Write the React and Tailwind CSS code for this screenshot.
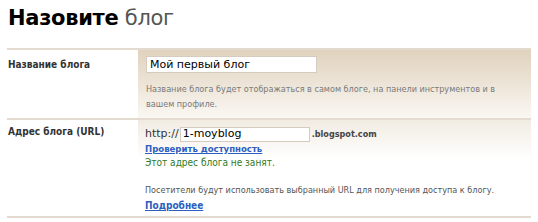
export default function App() {
  return (
    <div className="w-[538px] h-[222px] bg-white px-[7px] pt-[4px] text-[#333]" style={{ fontFamily: '"DejaVu Sans Condensed", "Liberation Sans", sans-serif' }}>
      {/* заголовок */}
      <h1 className="h-[44px] pl-[1px] pt-[2px] text-[21px] leading-[24px] tracking-[-0.3px]" style={{ fontFamily: '"DejaVu Sans", sans-serif' }}>
        <span className="font-bold text-black">Назовите</span>{' '}
        <span className="text-[#555]">блог</span>
      </h1>

      {/* название */}
      <div className="flex border-t-2 border-[#e3dbcf]">
        <div className="w-[131px] pl-[1px] pt-[7px] text-[10px] font-bold">Название блога</div>
        <div className="flex-1 bg-gradient-to-b from-[#e0d2bd] to-[#faf7f3] pl-[8px] pt-[6px] pb-[6px]">
          <input
            className="block w-[171px] h-[17px] border border-[#d5ccbf] bg-white px-[3px] text-[11px] text-black outline-none"
            style={{ fontFamily: '"DejaVu Sans", sans-serif' }}
            defaultValue="Мой первый блог"
          />
          <p className="mt-[9px] text-[9px] leading-[15px] text-[#7a7a7a] pr-[8px]">
            Название блога будет отображаться в самом блоге, на панели инструментов и в вашем профиле.
          </p>
        </div>
      </div>

      {/* адрес */}
      <div className="flex border-t-2 border-b-2 border-[#e3dbcf]">
        <div className="w-[131px] pl-[1px] pt-[4px] text-[10px] font-bold">Адрес блога (URL)</div>
        <div className="flex-1 bg-gradient-to-b from-[#f1ebe2] to-white to-[40%] pl-[7px] pt-[7px] pb-[3px]">
          <div className="flex items-center h-[15px]">
            <span className="text-[11px] mr-[1px]" style={{ fontFamily: '"DejaVu Sans", sans-serif' }}>http://</span>
            <input
              className="w-[130px] h-[15px] border border-[#d5ccbf] bg-white px-[2px] text-[11px] text-black outline-none"
              style={{ fontFamily: '"DejaVu Sans", sans-serif' }}
              defaultValue="1-moyblog"
            />
            <span className="ml-[2px] text-[9px] font-bold text-[#444]">.blogspot.com</span>
          </div>
          <a href="#" className="block text-[9.5px] font-bold text-[#2c5fc0] underline leading-[14px]">Проверить доступность</a>
          <p className="text-[10px] text-[#2f7a1f] leading-[14px]">Этот адрес блога не занят.</p>
          <p className="mt-[13px] text-[9px] text-[#555] leading-[14px]">Посетители будут использовать выбранный URL для получения доступа к блогу.</p>
          <a href="#" className="block mt-[2px] text-[10px] font-bold text-[#2c5fc0] underline leading-[14px]">Подробнее</a>
        </div>
      </div>
    </div>
  );
}
